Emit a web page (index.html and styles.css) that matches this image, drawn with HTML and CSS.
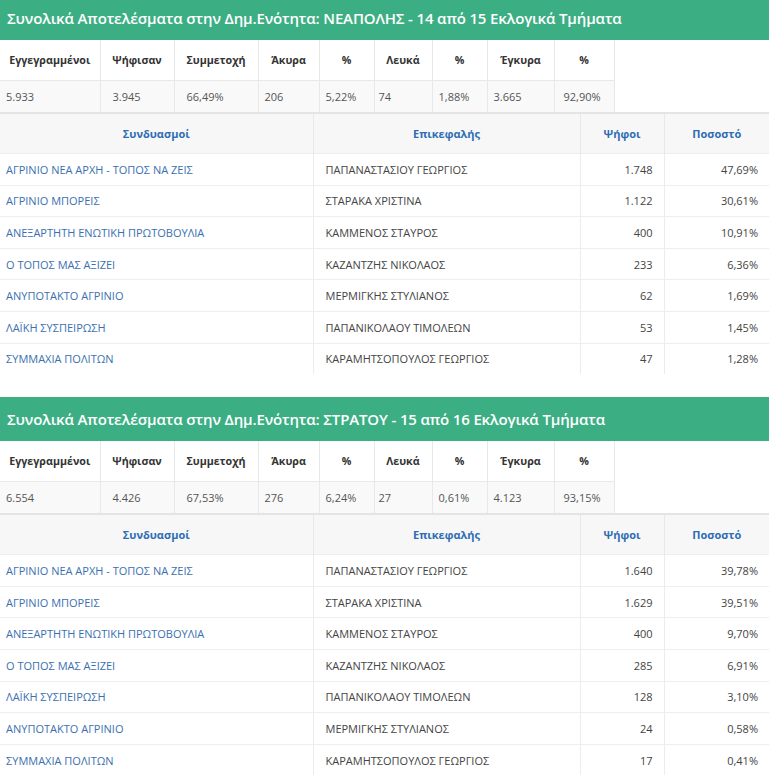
FILE: index.html
```html
<!DOCTYPE html>
<html lang="el">
<head>
<meta charset="utf-8">
<title>Αποτελέσματα</title>
<link rel="stylesheet" href="styles.css">
</head>
<body>
<div class="page">
  <section class="unit">
    <h2 class="unit-title">Συνολικά Αποτελέσματα στην Δημ.Ενότητα: ΝΕΑΠΟΛΗΣ - 14 από 15 Εκλογικά Τμήματα</h2>
    <table class="stats">
      <colgroup><col class="c1"><col class="c2"><col class="c3"><col class="c4"><col class="c5"><col class="c6"><col class="c7"><col class="c8"><col class="c9"></colgroup>
      <thead><tr><th>Εγγεγραμμένοι</th><th>Ψήφισαν</th><th>Συμμετοχή</th><th>Άκυρα</th><th>%</th><th>Λευκά</th><th>%</th><th>Έγκυρα</th><th>%</th></tr></thead>
      <tbody><tr><td>5.933</td><td class="wide">3.945</td><td class="wide">66,49%</td><td>206</td><td>5,22%</td><td class="narrow">74</td><td>1,88%</td><td>3.665</td><td class="pct">92,90%</td></tr></tbody>
    </table>
    <table class="results">
      <colgroup><col class="r1"><col class="r2"><col class="r3"><col class="r4"></colgroup>
      <thead><tr><th>Συνδυασμοί</th><th>Επικεφαλής</th><th>Ψήφοι</th><th>Ποσοστό</th></tr></thead>
      <tbody>
        <tr><td><a href="#">ΑΓΡΙΝΙΟ ΝΕΑ ΑΡΧΗ - ΤΟΠΟΣ ΝΑ ΖΕΙΣ</a></td><td>ΠΑΠΑΝΑΣΤΑΣΙΟΥ ΓΕΩΡΓΙΟΣ</td><td class="num">1.748</td><td class="num">47,69%</td></tr>
        <tr><td><a href="#">ΑΓΡΙΝΙΟ ΜΠΟΡΕΙΣ</a></td><td>ΣΤΑΡΑΚΑ ΧΡΙΣΤΙΝΑ</td><td class="num">1.122</td><td class="num">30,61%</td></tr>
        <tr><td><a href="#">ΑΝΕΞΑΡΤΗΤΗ ΕΝΩΤΙΚΗ ΠΡΩΤΟΒΟΥΛΙΑ</a></td><td>ΚΑΜΜΕΝΟΣ ΣΤΑΥΡΟΣ</td><td class="num">400</td><td class="num">10,91%</td></tr>
        <tr><td><a href="#">Ο ΤΟΠΟΣ ΜΑΣ ΑΞΙΖΕΙ</a></td><td>ΚΑΖΑΝΤΖΗΣ ΝΙΚΟΛΑΟΣ</td><td class="num">233</td><td class="num">6,36%</td></tr>
        <tr><td><a href="#">ΑΝΥΠΟΤΑΚΤΟ ΑΓΡΙΝΙΟ</a></td><td>ΜΕΡΜΙΓΚΗΣ ΣΤΥΛΙΑΝΟΣ</td><td class="num">62</td><td class="num">1,69%</td></tr>
        <tr><td><a href="#">ΛΑΪΚΗ ΣΥΣΠΕΙΡΩΣΗ</a></td><td>ΠΑΠΑΝΙΚΟΛΑΟΥ ΤΙΜΟΛΕΩΝ</td><td class="num">53</td><td class="num">1,45%</td></tr>
        <tr><td><a href="#">ΣΥΜΜΑΧΙΑ ΠΟΛΙΤΩΝ</a></td><td>ΚΑΡΑΜΗΤΣΟΠΟΥΛΟΣ ΓΕΩΡΓΙΟΣ</td><td class="num">47</td><td class="num">1,28%</td></tr>
      </tbody>
    </table>
  </section>

  <section class="unit">
    <h2 class="unit-title">Συνολικά Αποτελέσματα στην Δημ.Ενότητα: ΣΤΡΑΤΟΥ - 15 από 16 Εκλογικά Τμήματα</h2>
    <table class="stats">
      <colgroup><col class="c1"><col class="c2"><col class="c3"><col class="c4"><col class="c5"><col class="c6"><col class="c7"><col class="c8"><col class="c9"></colgroup>
      <thead><tr><th>Εγγεγραμμένοι</th><th>Ψήφισαν</th><th>Συμμετοχή</th><th>Άκυρα</th><th>%</th><th>Λευκά</th><th>%</th><th>Έγκυρα</th><th>%</th></tr></thead>
      <tbody><tr><td>6.554</td><td class="wide">4.426</td><td class="wide">67,53%</td><td>276</td><td>6,24%</td><td class="narrow">27</td><td>0,61%</td><td>4.123</td><td class="pct">93,15%</td></tr></tbody>
    </table>
    <table class="results">
      <colgroup><col class="r1"><col class="r2"><col class="r3"><col class="r4"></colgroup>
      <thead><tr><th>Συνδυασμοί</th><th>Επικεφαλής</th><th>Ψήφοι</th><th>Ποσοστό</th></tr></thead>
      <tbody>
        <tr><td><a href="#">ΑΓΡΙΝΙΟ ΝΕΑ ΑΡΧΗ - ΤΟΠΟΣ ΝΑ ΖΕΙΣ</a></td><td>ΠΑΠΑΝΑΣΤΑΣΙΟΥ ΓΕΩΡΓΙΟΣ</td><td class="num">1.640</td><td class="num">39,78%</td></tr>
        <tr><td><a href="#">ΑΓΡΙΝΙΟ ΜΠΟΡΕΙΣ</a></td><td>ΣΤΑΡΑΚΑ ΧΡΙΣΤΙΝΑ</td><td class="num">1.629</td><td class="num">39,51%</td></tr>
        <tr><td><a href="#">ΑΝΕΞΑΡΤΗΤΗ ΕΝΩΤΙΚΗ ΠΡΩΤΟΒΟΥΛΙΑ</a></td><td>ΚΑΜΜΕΝΟΣ ΣΤΑΥΡΟΣ</td><td class="num">400</td><td class="num">9,70%</td></tr>
        <tr><td><a href="#">Ο ΤΟΠΟΣ ΜΑΣ ΑΞΙΖΕΙ</a></td><td>ΚΑΖΑΝΤΖΗΣ ΝΙΚΟΛΑΟΣ</td><td class="num">285</td><td class="num">6,91%</td></tr>
        <tr><td><a href="#">ΛΑΪΚΗ ΣΥΣΠΕΙΡΩΣΗ</a></td><td>ΠΑΠΑΝΙΚΟΛΑΟΥ ΤΙΜΟΛΕΩΝ</td><td class="num">128</td><td class="num">3,10%</td></tr>
        <tr><td><a href="#">ΑΝΥΠΟΤΑΚΤΟ ΑΓΡΙΝΙΟ</a></td><td>ΜΕΡΜΙΓΚΗΣ ΣΤΥΛΙΑΝΟΣ</td><td class="num">24</td><td class="num">0,58%</td></tr>
        <tr><td><a href="#">ΣΥΜΜΑΧΙΑ ΠΟΛΙΤΩΝ</a></td><td>ΚΑΡΑΜΗΤΣΟΠΟΥΛΟΣ ΓΕΩΡΓΙΟΣ</td><td class="num">17</td><td class="num">0,41%</td></tr>
      </tbody>
    </table>
  </section>
</div>
</body>
</html>
```
FILE: styles.css
```css
html, body {
  margin: 0;
  padding: 0;
  background: #fff;
}
body {
  font-family: "Open Sans", "Noto Sans", "DejaVu Sans", sans-serif;
  font-size: 11px;
  color: #555;
}
.page {
  margin-top: -4px;
  width: 769px;
}
.unit {
  margin-bottom: 23px;
}
.unit-title {
  margin: 0;
  height: 44px;
  display: flex;
  align-items: center;
  padding: 0 7px;
  background: #3cae83;
  color: #fff;
  font-size: 15px;
  font-weight: 600;
  letter-spacing: -0.15px;
  white-space: nowrap;
  overflow: hidden;
}
table {
  border-collapse: collapse;
  table-layout: fixed;
}
/* stats table */
.stats {
  width: 614px;
}
.stats .c1 { width: 100px; }
.stats .c2 { width: 74px; }
.stats .c3 { width: 84px; }
.stats .c4 { width: 61px; }
.stats .c5 { width: 55px; }
.stats .c6 { width: 58px; }
.stats .c7 { width: 55px; }
.stats .c8 { width: 67px; }
.stats .c9 { width: 60px; }
.stats th {
  height: 40px;
  padding: 0 2px;
  text-align: center;
  font-weight: 700;
  font-size: 10.7px;
  color: #333;
  border-right: 1px solid #e8e8e8;
  border-bottom: 1px solid #e8e8e8;
  white-space: nowrap;
}
.stats td {
  height: 31px;
  padding: 0 6px;
  text-align: left;
  background: #f9f9f9;
  color: #555;
  border-right: 1px solid #e8e8e8;
  white-space: nowrap;
}
.stats td.wide { padding-left: 12px; }
.stats td.narrow { padding-left: 4px; }
.stats td.pct { padding-left: 9px; }
/* results table */
.results {
  width: 769px;
  border-top: 2px solid #e4e4e4;
}
.results .r1 { width: 313px; }
.results .r2 { width: 267px; }
.results .r3 { width: 84px; }
.results .r4 { width: 105px; }
.results th {
  height: 39px;
  padding: 0 6px;
  background: #f7f7f7;
  color: #2d6db3;
  font-weight: 700;
  text-align: center;
  border-right: 1px solid #e8e8e8;
}
.results th:last-child,
.results td:last-child {
  border-right: none;
}
.results td {
  height: 30.6px;
  padding: 0 6px;
  border-right: 1px solid #ececec;
  border-top: 1px solid #eeeeee;
  color: #444;
  white-space: nowrap;
}
.results td:nth-child(2) {
  padding-left: 12px;
}
.results td.num {
  text-align: right;
  padding-right: 11px;
}
.results a {
  color: #3a70b0;
  text-decoration: none;
}
```
